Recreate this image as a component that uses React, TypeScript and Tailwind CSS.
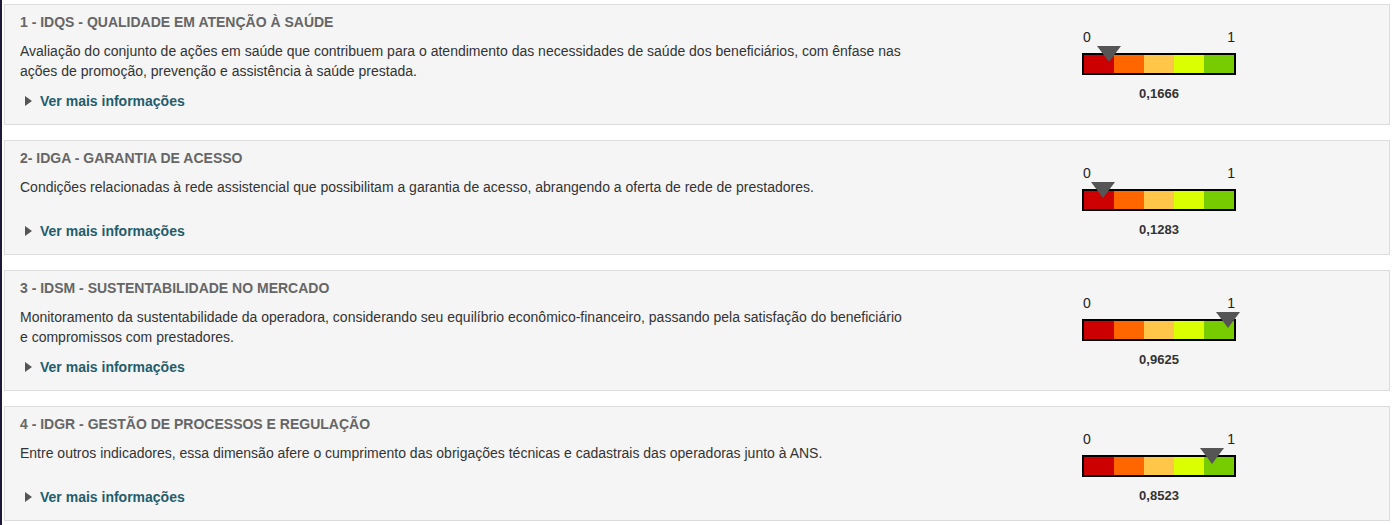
import React from "react"

type Dimension = {
  title: string
  description: string
  value: number
}

const dimensions: Dimension[] = [
  {
    title: "1 - IDQS - QUALIDADE EM ATENÇÃO À SAÚDE",
    description:
      "Avaliação do conjunto de ações em saúde que contribuem para o atendimento das necessidades de saúde dos beneficiários, com ênfase nas ações de promoção, prevenção e assistência à saúde prestada.",
    value: 0.1666,
  },
  {
    title: "2- IDGA - GARANTIA DE ACESSO",
    description:
      "Condições relacionadas à rede assistencial que possibilitam a garantia de acesso, abrangendo a oferta de rede de prestadores.",
    value: 0.1283,
  },
  {
    title: "3 - IDSM - SUSTENTABILIDADE NO MERCADO",
    description:
      "Monitoramento da sustentabilidade da operadora, considerando seu equilíbrio econômico-financeiro, passando pela satisfação do beneficiário e compromissos com prestadores.",
    value: 0.9625,
  },
  {
    title: "4 - IDGR - GESTÃO DE PROCESSOS E REGULAÇÃO",
    description:
      "Entre outros indicadores, essa dimensão afere o cumprimento das obrigações técnicas e cadastrais das operadoras junto à ANS.",
    value: 0.8523,
  },
]

const segments = ["bg-[#cc0000]", "bg-[#ff6600]", "bg-[#ffc64a]", "bg-[#d9ff00]", "bg-[#77cc00]"]

function Gauge({ value }: { value: number }) {
  return (
    <div className="mt-[15px] w-[154px] shrink-0">
      {/* escala */}
      <div className="flex justify-between px-[1px] text-[14px] leading-[20px] text-[#222]">
        <span>0</span>
        <span>1</span>
      </div>
      <div className="relative mt-[6px] flex h-[22px] border-2 border-black">
        {segments.map((c) => (
          <div key={c} className={`h-full flex-1 ${c}`} />
        ))}
        {/* marcador */}
        <svg
          className="absolute top-[-9px]"
          style={{ left: value * 150 - 12 }}
          width="24"
          height="16"
          viewBox="0 0 24 16"
        >
          <polygon points="0,0 24,0 12,16" fill="#555555" />
        </svg>
      </div>
      <div className="mt-[9px] text-center text-[13px] font-bold leading-[20px] text-[#333]">
        {value.toFixed(4).replace(".", ",")}
      </div>
    </div>
  )
}

function DimensionCard({ item }: { item: Dimension }) {
  return (
    <div className="border border-[#dcdcdc] bg-[#f5f5f5] px-[15px] pt-[8px] pb-[13px]">
      <div className="flex items-start">
        <div className="w-[888px] shrink-0">
          <h3 className="text-[14px] font-bold leading-[18px] text-[#666]">{item.title}</h3>
          <p className="mt-[10px] min-h-[34px] text-[14px] leading-[20px] text-[#333]">
            {item.description}
          </p>
          <button className="mt-[10px] flex items-center pl-[5px] text-[14px] font-bold leading-[20px] text-[#1f5d6c]">
            <svg width="7" height="10" viewBox="0 0 7 10" className="mr-[8px]">
              <polygon points="0,0 7,5 0,10" fill="#555555" />
            </svg>
            Ver mais informações
          </button>
        </div>
        <div className="ml-[174px] mt-[-1px]">
          <Gauge value={item.value} />
        </div>
      </div>
    </div>
  )
}

export default function App() {
  return (
    <div
      className="min-h-[525px] border-l-2 border-[#1f1838] bg-white pt-[4px] pl-[2px] pr-[4px]"
      style={{ fontFamily: '"Liberation Sans", Arial, sans-serif' }}
    >
      <div className="flex flex-col gap-[15px]">
        {dimensions.map((d) => (
          <DimensionCard key={d.title} item={d} />
        ))}
      </div>
    </div>
  )
}
